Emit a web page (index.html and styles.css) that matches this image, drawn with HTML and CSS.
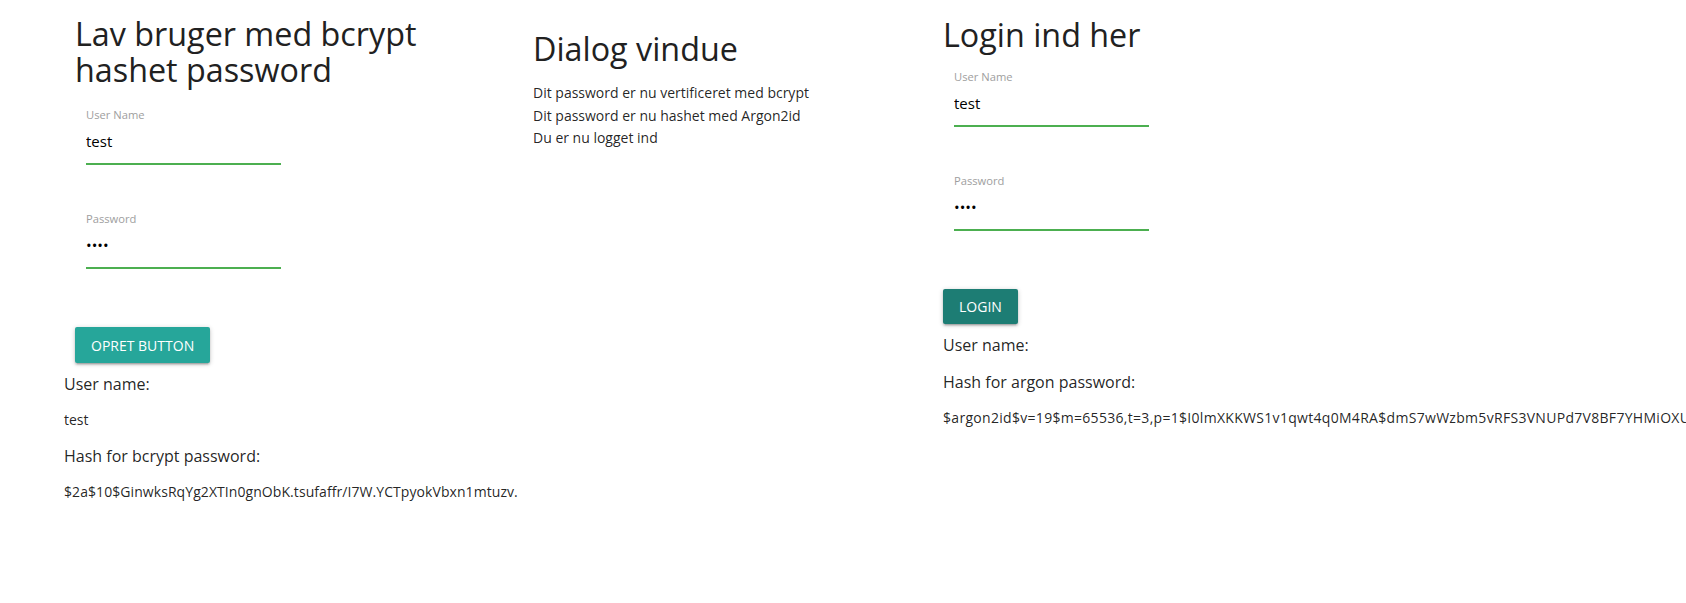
FILE: index.html
```html
<!DOCTYPE html>
<html lang="da">
<head>
<meta charset="utf-8">
<title>bcrypt / argon2</title>
<link rel="stylesheet" href="styles.css">
</head>
<body>
<main class="page">
  <section class="col col-create">
    <div class="form-block">
      <h2 class="title title-create">Lav bruger med bcrypt hashet password</h2>
      <div class="field field-first-create">
        <label class="field-label">User Name</label>
        <input class="field-input" type="text" value="test">
      </div>
      <div class="field">
        <label class="field-label">Password</label>
        <input class="field-input" type="password" value="test">
      </div>
      <button class="btn" type="button">Opret button</button>
    </div>
    <div class="results">
      <p class="result-label">User name:</p>
      <p class="result-value">test</p>
      <p class="result-label">Hash for bcrypt password:</p>
      <p class="result-value hash">$2a$10$GinwksRqYg2XTIn0gnObK.tsufaffr/I7W.YCTpyokVbxn1mtuzv.</p>
    </div>
  </section>

  <section class="col col-dialog">
    <h2 class="title title-dialog">Dialog vindue</h2>
    <div class="dialog-lines">
      <p class="dialog-line">Dit password er nu vertificeret med bcrypt</p>
      <p class="dialog-line">Dit password er nu hashet med Argon2id</p>
      <p class="dialog-line">Du er nu logget ind</p>
    </div>
  </section>

  <section class="col col-login">
    <h2 class="title title-login">Login ind her</h2>
    <div class="field field-first-login">
      <label class="field-label">User Name</label>
      <input class="field-input" type="text" value="test">
    </div>
    <div class="field">
      <label class="field-label">Password</label>
      <input class="field-input" type="password" value="test">
    </div>
    <button class="btn btn-focus" type="button">Login</button>
    <div class="results">
      <p class="result-label">User name:</p>
      <p class="result-value"></p>
      <p class="result-label">Hash for argon password:</p>
      <p class="result-value hash hash-argon">$argon2id$v=19$m=65536,t=3,p=1$I0lmXKKWS1v1qwt4q0M4RA$dmS7wWzbm5vRFS3VNUPd7V8BF7YHMiOXU</p>
    </div>
  </section>
</main>
</body>
</html>
```

FILE: styles.css
```css
html, body {
  margin: 0;
  padding: 0;
  overflow: hidden;
  background: #fff;
}
body {
  font-family: "Open Sans", "Noto Sans", sans-serif;
  color: rgba(0, 0, 0, 0.87);
  width: 1686px;
  height: 603px;
}
.page {
  display: flex;
  align-items: flex-start;
  padding-left: 64px;
}
.col {
  box-sizing: border-box;
  flex: none;
}
.col-create { width: 456px; }
.col-dialog { width: 410px; padding-left: 13px; }
.col-login { padding-left: 13px; white-space: nowrap; }

.form-block { padding-left: 11px; }

.title {
  font-weight: 400;
  font-size: 32.3px;
  line-height: 36px;
  margin: 0;
  color: #212121;
}
.title-create { margin-top: 15px; width: 370px; }
.title-login { margin-top: 16px; }
.title-dialog { margin-top: 30px; }

.field { width: 195px; margin-left: 11px; }
.field + .field { margin-top: 47px; }
.field-first-create { margin-top: 20px; }
.field-first-login { margin-top: 17px; }
.field-label {
  display: block;
  font-size: 11.2px;
  line-height: 16px;
  color: #9e9e9e;
  margin-bottom: 6px;
}
.field-input {
  display: block;
  box-sizing: content-box;
  width: 100%;
  height: 24px;
  padding: 0 0 10px;
  margin: 0;
  border: none;
  border-bottom: 1px solid #4caf50;
  box-shadow: 0 1px 0 0 #4caf50;
  outline: none;
  background: transparent;
  font-family: inherit;
  font-size: 15px;
  color: #000;
}
.btn {
  display: block;
  margin-top: 59px;
  height: 36px;
  padding: 0 16px;
  border: none;
  border-radius: 2px;
  background: #26a69a;
  color: #fff;
  font-family: inherit;
  font-size: 14px;
  letter-spacing: 0;
  text-transform: uppercase;
  box-shadow: 0 2px 2px 0 rgba(0,0,0,0.14), 0 3px 1px -2px rgba(0,0,0,0.12), 0 1px 5px 0 rgba(0,0,0,0.2);
}
.btn-focus { background: #1d7d74; height: 35px; }

.results { margin-top: 10px; }
.result-label {
  margin: 0 0 15px;
  font-size: 16px;
  line-height: 22px;
}
.result-value {
  margin: 0 0 15px;
  font-size: 14px;
  line-height: 20px;
}
.hash { letter-spacing: 0.07px; }
.hash-argon { letter-spacing: 0.3px; }
.dialog-lines { margin-top: 16px; }
.dialog-line {
  margin: 0;
  font-size: 14px;
  line-height: 22.5px;
}
```
